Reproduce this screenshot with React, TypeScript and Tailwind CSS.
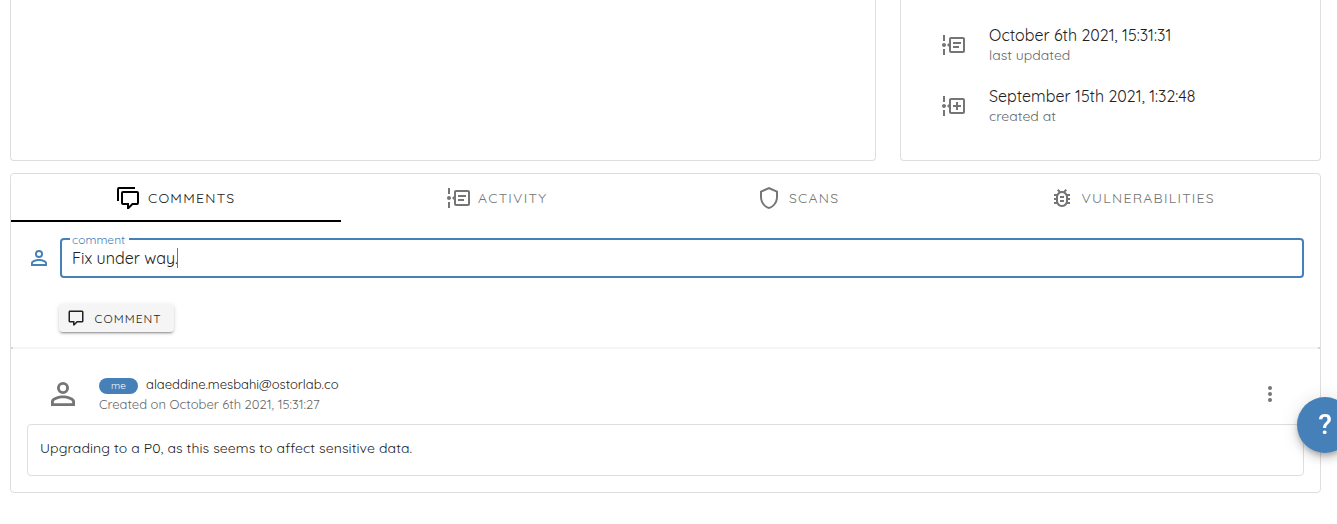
import React from "react";

const ACCOUNT =
  "M12,4A4,4 0 0,1 16,8A4,4 0 0,1 12,12A4,4 0 0,1 8,8A4,4 0 0,1 12,4M12,5.9A2.1,2.1 0 0,0 9.9,8A2.1,2.1 0 0,0 12,10.1A2.1,2.1 0 0,0 14.1,8A2.1,2.1 0 0,0 12,5.9M12,13C14.67,13 20,14.33 20,17V20H4V17C4,14.33 9.33,13 12,13M12,14.9C9.03,14.9 5.9,16.36 5.9,17V18.1H18.1V17C18.1,16.36 14.97,14.9 12,14.9Z";
const TIMELINE =
  "M4 2V8H2V2H4M2 22H4V16H2V22M5 12C5 13.11 4.11 14 3 14S1 13.11 1 12 1.9 10 3 10 5 10.9 5 12M24 6V18C24 19.11 23.11 20 22 20H10C8.9 20 8 19.11 8 18V14L6 12L8 10V6C8 4.89 8.89 4 10 4H22C23.11 4 24 4.89 24 6M22 6H10V18H22V6";
const TIMELINE_TEXT = TIMELINE + "M12 9H20V11H12V9M12 13H18V15H12V13Z";
const TIMELINE_PLUS = TIMELINE + "M15 8H17V11H20V13H17V16H15V13H12V11H15Z";
const COMMENTS =
  "M3,15H1V3A2,2 0 0,1 3,1H19V3H3V15M11,23V19H7A2,2 0 0,1 5,17V7A2,2 0 0,1 7,5H21A2,2 0 0,1 23,7V17A2,2 0 0,1 21,19H16.9L12.9,23H11M13,17V20.08L16.08,17H21V7H7V17H13Z";
const COMMENT =
  "M8,22V18H4A2,2 0 0,1 2,16V4C2,2.89 2.9,2 4,2H20A2,2 0 0,1 22,4V16A2,2 0 0,1 20,18H13.9L9.9,22H8M10,16V19.08L13.08,16H20V4H4V16H10Z";
const SHIELD =
  "M21,11C21,16.55 17.16,21.74 12,23C6.84,21.74 3,16.55 3,11V5L12,1L21,5V11M12,21C15.75,20 19,15.54 19,11.22V6.3L12,3.18L5,6.3V11.22C5,15.54 8.25,20 12,21Z";
const BUG =
  "M20 8h-2.81c-.45-.78-1.07-1.45-1.82-1.96L17 4.41 15.59 3l-2.17 2.17C12.96 5.06 12.49 5 12 5s-.96.06-1.41.17L8.41 3 7 4.41l1.62 1.63C7.88 6.55 7.26 7.22 6.81 8H4v2h2.09c-.05.33-.09.66-.09 1v1H4v2h2v1c0 .34.04.67.09 1H4v2h2.81c1.04 1.79 2.97 3 5.19 3s4.15-1.21 5.19-3H20v-2h-2.09c.05-.33.09-.66.09-1v-1h2v-2h-2v-1c0-.34-.04-.67-.09-1H20V8zm-4 7c0 2.21-1.79 4-4 4s-4-1.79-4-4v-4c0-2.21 1.79-4 4-4s4 1.79 4 4v4zm-6-1h4v2h-4zm0-4h4v2h-4z";

function Icon({ d, className }: { d: string; className: string }) {
  return (
    <svg viewBox="0 0 24 24" className={`shrink-0 fill-current ${className}`}>
      <path d={d} fillRule="evenodd" />
    </svg>
  );
}

function DateRow({ icon, date, label }: { icon: string; date: string; label: string }) {
  return (
    <div className="flex h-[61px] items-center whitespace-nowrap">
      <Icon d={icon} className="size-6 text-[#757575]" />
      <div className="ml-6">
        <div className="text-base leading-5 text-[#212121]">{date}</div>
        <div className="text-sm leading-5 text-[#666666]">{label}</div>
      </div>
    </div>
  );
}

export default function App() {
  return (
    <div className="h-[524px] w-[1337px] overflow-hidden bg-white font-['Quicksand','Lato',sans-serif] text-[#212121]">
      <div className="flex h-[161px] gap-6 pl-[10px]">
        <div className="w-[866px] rounded-b border border-t-0 border-[#dedede]" />
        <div className="w-[421px] rounded-b border border-t-0 border-[#dedede] pl-10 pt-[14px]">
          <DateRow icon={TIMELINE_TEXT} date="October 6th 2021, 15:31:31" label="last updated" />
          <DateRow icon={TIMELINE_PLUS} date="September 15th 2021, 1:32:48" label="created at" />
        </div>
      </div>

      <div className="ml-[10px] mt-3 h-[320px] w-[1311px] rounded border border-[#dedede]">
        <div className="flex h-12 whitespace-nowrap text-sm text-[#757575]">
          <div className="flex w-[330px] items-center border-b-2 border-black pl-[105px] pt-0.5 text-black">
            <Icon d={COMMENTS} className="size-6" />
            <span className="ml-2 tracking-[1.25px] text-[#212121]">COMMENTS</span>
          </div>
          <div className="flex w-[305px] items-center pl-[105px]">
            <Icon d={TIMELINE_TEXT} className="size-6" />
            <span className="ml-2 tracking-[1.25px]">ACTIVITY</span>
          </div>
          <div className="flex w-[298px] items-center pl-[111px]">
            <Icon d={SHIELD} className="size-6" />
            <span className="ml-2 tracking-[1.25px]">SCANS</span>
          </div>
          <div className="flex items-center pl-[105.5px]">
            <Icon d={BUG} className="size-6" />
            <span className="ml-2 tracking-[1.25px]">VULNERABILITIES</span>
          </div>
        </div>

        <div className="h-[125px] pt-4">
          <div className="flex items-center">
            <Icon d={ACCOUNT} className="ml-4 size-6 text-[#4680b9]" />
            <div className="relative ml-[9px] flex h-10 w-[1244px] items-center rounded border-2 border-[#4680b9] pl-[10px]">
              <span className="absolute -top-[7px] left-2 bg-white pl-0.5 pr-1 text-xs leading-[14px] text-[#4680b9]">comment</span>
              <span className="text-base">Fix under way.</span>
              <span className="-ml-px h-5 w-px bg-[#4680b9]" />
            </div>
          </div>
          <button className="ml-12 mt-[26px] flex h-7 w-[115px] items-center rounded bg-[#f5f5f5] pl-[8.4px] text-xs shadow-[0_3px_1px_-2px_rgba(0,0,0,.2),0_2px_2px_rgba(0,0,0,.14),0_1px_5px_rgba(0,0,0,.12)]">
            <Icon d={COMMENT} className="size-[18px]" />
            <span className="ml-[9.1px] pt-0.5 tracking-[1.07px]">COMMENT</span>
          </button>
        </div>
        <div className="flex h-0.5 justify-between bg-[#f5f5f5]">
          <i className="h-0.5 w-0.5 rounded-r-full bg-[#d0d0d0]" />
          <i className="h-0.5 w-0.5 rounded-l-full bg-[#d0d0d0]" />
        </div>

        <div className="flex h-[75px] items-center pl-[34px] pt-[15px]">
          <Icon d={ACCOUNT} className="-mt-px size-9 text-[#757575]" />
          <div className="ml-[18px] whitespace-nowrap text-[13px] leading-5">
            <div className="flex h-5 items-center">
              <span className="mt-[3px] flex h-4 w-[39px] items-center justify-center rounded-full bg-[#4680b9] text-[10px] text-white">me</span>
              <span className="ml-2">alaeddine.mesbahi@ostorlab.co</span>
            </div>
            <div className="text-[#666666]">Created on October 6th 2021, 15:31:27</div>
          </div>
          <div className="ml-auto mr-[48px] flex w-1 flex-col gap-0.5">
            <i className="size-1 rounded-full bg-[#757575]" />
            <i className="size-1 rounded-full bg-[#757575]" />
            <i className="size-1 rounded-full bg-[#757575]" />
          </div>
        </div>
        <div className="ml-4 flex h-[52px] w-[1277px] items-center rounded border border-[#dedede] pl-3 text-sm">
          <span className="-mt-1 tracking-[0.1px]">Upgrading to a P0, as this seems to affect sensitive data.</span>
        </div>
      </div>

      <button className="fixed left-[1297px] top-[397px] flex size-14 items-center justify-center rounded-full bg-[#4680b9] text-white shadow-[0_3px_5px_-1px_rgba(0,0,0,.2),0_6px_10px_rgba(0,0,0,.14),0_1px_18px_rgba(0,0,0,.12)]">
        <span className="font-['Roboto',sans-serif] text-[28px] font-medium">?</span>
      </button>
    </div>
  );
}
